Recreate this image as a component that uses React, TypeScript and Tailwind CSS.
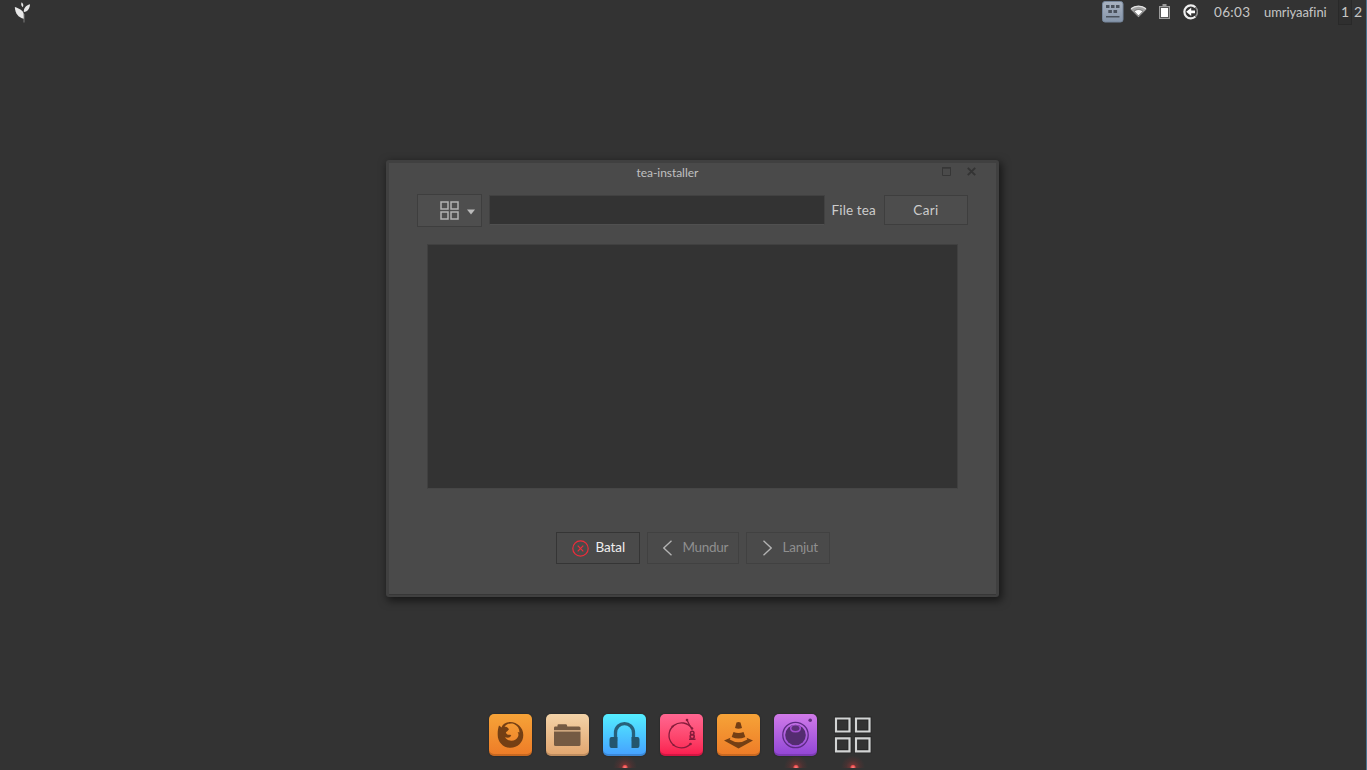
import type { ReactNode } from "react";

function LeafLogo() {
  return (
    <svg className="ml-[14px] h-[24px] w-[18px]" viewBox="0 0 18 24" fill="#e8e8e8">
      <path d="M.8 7C5 8.400 9.600 10.500 9.800 14.500L10 18.800C4 17.400 1.300 13.500.8 7Z" />
      <path d="M16 4.200C11.500 5.500 9.700 8 9.800 12C14 11.300 15.600 8.800 16 4.200Z" />
      <path d="M7.700 2.300C9.500 3.700 9.700 5.700 8.800 7.200C7 6 6.800 4 7.700 2.300Z" />
      <path d="M10 14V22.500" stroke="#8f8f8f" strokeWidth=".8" />
    </svg>
  );
}

function KeyboardIcon() {
  return (
    <svg className="mt-px h-[22px] w-[22px]" viewBox="0 0 22 22">
      <defs>
        <linearGradient id="kb" x1="0" y1="0" x2="0" y2="1">
          <stop stopColor="#a9b3c1" />
          <stop offset="1" stopColor="#8595aa" />
        </linearGradient>
      </defs>
      <rect x=".5" y=".5" width="20.500" height="20.500" rx="2.500" fill="url(#kb)" stroke="#76869b" />
      <path d="M4 4h3.500v3H4zM9 4h3.500v3H9zM14 4h3.500v3H14zM6.300 9h3.600v3H6.300zM11.500 9h3.600v3h-3.600zM4 15h13.500v1.600H4z" fill="#4a525d" />
    </svg>
  );
}

function WifiIcon() {
  return (
    <svg className="ml-[6px] mt-[5px] h-[13px] w-[17px]" viewBox="0 0 17 13">
      <path d="M.5 4.200C5-.2 12-.2 16.500 4.200L8.500 12.300Z" fill="#a5a5a5" />
      <path d="M1 3.800C5.200.2 11.800.2 16 3.800" fill="none" stroke="#e4e4e4" strokeWidth="1.200" />
      <path d="M4 6.300C7 3.900 10 3.900 13 6.300L8.500 11Z" fill="#fff" stroke="#666" strokeWidth=".9" />
    </svg>
  );
}

function BatteryIcon() {
  return (
    <svg className="ml-[12px] mt-[4px] h-[16px] w-[11px]" viewBox="0 0 11 16">
      <path d="M3.500 0h4v2H11v13H0V2h3.500z" fill="#9b9b9b" />
      <path d="M1 3h9v11H1z" fill="#575757" />
      <path d="M2 4h7v9H2z" fill="#fff" />
    </svg>
  );
}

function SessionIcon() {
  return (
    <svg className="ml-[12px] mt-[4px] h-[16px] w-[16px]" viewBox="0 0 16 16" fill="none">
      <path d="M13.400 3.200A6.500 6.500 0 1 0 13.400 12.500" stroke="#eee" strokeWidth="2.200" />
      <path d="M13.500 3.200A6.500 6.500 0 0 1 13.500 12.500" stroke="#8e8e8e" strokeWidth="1.600" />
      <path d="M4.200 7.800 9.200 3.700V6.500H13V9.200H9.200V12Z" fill="#fff" />
    </svg>
  );
}

function TopPanel() {
  return (
    <header className="flex h-[25px] w-full items-start justify-between text-[13px] text-[#c6c6c6]">
      <LeafLogo />
      <div className="flex h-full items-start whitespace-nowrap leading-[24px]">
        <KeyboardIcon />
        <WifiIcon />
        <BatteryIcon />
        <SessionIcon />
        <span className="ml-[16px] w-[50px] text-[13.500px] tracking-[0.350px]">06:03</span>
        <span className="w-[74px] text-[13px] tracking-[-0.050px]">umriyaafini</span>
        <span className="h-[25px] w-[14px] border border-t-0 border-[#292929] bg-[#2f2f2f] text-center text-[14px]">1</span>
        <span className="ml-[2px] w-[12px] text-[14px]">2</span>
      </div>
    </header>
  );
}

function GridIcon({ className }: { className: string }) {
  return (
    <svg className={className} viewBox="0 0 19 19" fill="none" stroke="#b3b3b3" strokeWidth="1.500">
      <path d="M1 1h7v7H1zM11 1h7v7h-7zM1 11h7v7H1zM11 11h7v7h-7z" />
    </svg>
  );
}

function TitleBar() {
  return (
    <div className="flex h-[23px] items-start">
      <div className="w-[248px]" />
      <h1 className="w-[305px] pt-[1px] text-[12px] leading-[18px] tracking-[-0.050px] text-[#c0c0c0]">tea-installer</h1>
      <svg className="mt-[4px] h-[9px] w-[9px]" viewBox="0 0 9 9" fill="none" stroke="#363636">
        <path d="M.5 1h8v7.500h-8z" />
        <path d="M0 .8h9" strokeWidth="1.400" />
      </svg>
      <svg className="ml-[16px] mt-[4px] h-[9px] w-[9px]" viewBox="0 0 9 9" fill="none" stroke="#333333" strokeWidth="1.900">
        <path d="M.8.8 8.200 8.200M8.200.8.8 8.200" />
      </svg>
    </div>
  );
}

function ActionButton({ className, icon, children }: { className: string; icon: ReactNode; children: ReactNode }) {
  return (
    <button className={`flex h-[32px] items-center border text-left text-[13.500px] ${className}`}>
      {icon}
      <span className="pb-[2px] leading-[28px]">{children}</span>
    </button>
  );
}

function InstallerWindow() {
  return (
    <main className="mx-auto mt-[135px] h-[437px] w-[613px] shrink-0 translate-x-[9px] rounded-[3px] border-[3px] border-b-[2px] border-[#404040] bg-[#4a4a4a] shadow-[2px_3px_8px_1px_rgba(0,0,0,0.55)]">
      <div className="flex h-full flex-col border-b border-[#373737]">
        <TitleBar />
        <div className="ml-[28px] flex h-[58px] items-start pt-[8px] text-[13.500px] text-[#cccccc]">
          <button className="flex h-[33px] w-[65px] items-center border border-[#3e3e3e] bg-[#4e4e4e] pl-[22px]">
            <GridIcon className="h-[19px] w-[19px] shrink-0" />
            <svg className="ml-[8px] mt-[3px] h-[6px] w-[8px]" viewBox="0 0 8 6">
              <path d="M0 .5h8L4 5.500z" fill="#bababa" />
            </svg>
          </button>
          <input className="ml-[7px] mt-px h-[30px] w-[336px] border border-[#414141] border-b-[#505050] bg-[#333333]" />
          <span className="ml-[7px] mt-px w-[52px] whitespace-nowrap leading-[30px] tracking-[0.150px]">File tea</span>
          <button className="mt-px h-[30px] w-[84px] border border-[#3e3e3e] bg-[#4d4d4d] pl-px leading-[27px] tracking-[0.350px]">Cari</button>
        </div>
        <section className="ml-[38px] h-[245px] w-[531px] border border-[#404040] border-b-[#464646] bg-[#333333]" />
        <div className="ml-[167px] mt-[43px] flex">
          <ActionButton
            className="w-[84px] border-[#353535] pl-[15px] tracking-[-0.100px] text-[#eeeeee]"
            icon={
              <svg className="mr-[7px] h-[17px] w-[17px]" viewBox="0 0 17 17" fill="none" stroke="#ee2c3a" strokeWidth="1.200">
                <circle cx="8.500" cy="8.500" r="7.700" />
                <path d="M5.700 5.700 11.300 11.300M11.300 5.700 5.700 11.300" />
              </svg>
            }
          >
            Batal
          </ActionButton>
          <ActionButton
            className="ml-[7px] w-[92px] border-[#414141] pl-[15px] tracking-[-0.300px] text-[#8f8f8f]"
            icon={
              <svg className="mr-[11px] h-[16px] w-[9px]" viewBox="0 0 9 16" fill="none" stroke="#b4b4b4" strokeWidth="1.300">
                <path d="M8.500.7.800 8 8.500 15.300" />
              </svg>
            }
          >
            Mundur
          </ActionButton>
          <ActionButton
            className="ml-[7px] w-[84px] border-[#414141] pl-[16px] tracking-[-0.250px] text-[#8f8f8f]"
            icon={
              <svg className="mr-[11px] h-[16px] w-[9px]" viewBox="0 0 9 16" fill="none" stroke="#b4b4b4" strokeWidth="1.300">
                <path d="M.5.700 8.200 8 .5 15.300" />
              </svg>
            }
          >
            Lanjut
          </ActionButton>
        </div>
      </div>
    </main>
  );
}

function DockItem({ className, running, children }: { className: string; running?: boolean; children: ReactNode }) {
  return (
    <div className="relative h-[56px] w-[43px]">
      <div className={`h-[42px] w-[43px] rounded-[5px] ${className}`}>
        <svg className="h-[43px] w-[43px]" viewBox="0 0 43 43">{children}</svg>
      </div>
      {running && (
        <span className="absolute bottom-[2px] left-[9px] h-[12px] w-[26px] bg-[radial-gradient(circle_at_50%_95%,#ff8585_0px,#e74c4c_2px,#a8353577_3px,#7d303044_7px,transparent_12px)]" />
      )}
    </div>
  );
}

const tile = "shadow-[inset_0_-2px_0_#00000028,0_0_2px_#00000066] bg-linear-to-b";

function Dock() {
  return (
    <nav className="ml-[489px] mt-auto flex h-[56px] shrink-0 gap-[14px]">
      <DockItem className={`${tile} from-[#f6a338] to-[#ed7b27]`}>
        <path
          fill="#743f14"
          fillRule="evenodd"
          d="M10 11.500 12.700 13.500C12.700 12 14.500 9.500 18 8.500C26 6.300 34.300 12.500 34.300 21C34.300 28.500 28.500 33.800 21.500 33.800C14 33.800 8.700 28 8.700 21C8.600 17 9 14.500 10 11.500ZM15.500 12.800C18 12.300 18.600 13.800 20 15.200L18 17.500C16.500 17.800 16.500 19.200 18 20.300C19.700 21.500 20.500 20.200 22.300 21.500C20.500 24.300 18.500 23.800 16 23.200C19 27.800 26.500 28 29 22.800C29.800 21 29.500 19.500 28.600 18L30.500 18.500C30.500 14.500 28.500 11.500 25 10C21.500 8.800 17.500 9.800 15.500 12.800Z"
        />
      </DockItem>
      <DockItem className={`${tile} from-[#f3d3a8] to-[#e1a56e]`}>
        <g fill="#745a43">
          <path d="M8 16.300V14C8 12.900 8.800 12.500 9.500 12.500H11.500V11.300Q11.500 10.300 12.500 10.300H20Q21 10.300 21.300 12.500H33Q34.500 12.500 34.500 14V16.300Z" />
          <path d="M8 17.500H34.500V30.500Q34.500 32 33 32H9.500Q8 32 8 30.500Z" />
        </g>
      </DockItem>
      <DockItem running className={`${tile} from-[#55eeff] to-[#469fff]`}>
        <path d="M12.500 27V19C12.500 6.500 30.500 6.500 30.500 19V27" fill="none" stroke="#27607a" strokeWidth="3.300" />
        <path d="M8.500 23H14.500V34H8.500Q6.500 34 6.500 31V26Q6.500 23 8.500 23ZM28.500 23H34.500Q36.500 23 36.500 26V31Q36.500 34 34.500 34H28.500Z" fill="#24566e" />
      </DockItem>
      <DockItem className={`${tile} from-[#ff6691] to-[#fa164d]`}>
        <path d="M32 14.500A12.500 12.500 0 1 0 30.500 30" fill="none" stroke="#861c3b" strokeWidth="1.300" />
        <path d="M27 6 29.500 11 32 14.500" fill="none" stroke="#861c3b" strokeWidth="1.200" />
        <g fill="#861c3b">
          <circle cx="27" cy="6" r="1.300" /><circle cx="32" cy="14.500" r="1.300" />
          <circle cx="12.500" cy="12.500" r="1.100" /><circle cx="13.500" cy="31" r="1.100" />
          <circle cx="30.500" cy="30" r="1.300" />
          <path d="M29 24.500H35.500V26H29Z" />
        </g>
        <circle cx="32.200" cy="19" r="1.800" fill="none" stroke="#861c3b" strokeWidth="1.400" />
        <circle cx="32.200" cy="22.600" r="2" fill="none" stroke="#861c3b" strokeWidth="1.600" />
      </DockItem>
      <DockItem className={`${tile} from-[#f6a338] to-[#ed7b27]`}>
        <g fill="#743f14">
          <path d="M19.500 8.500Q21.500 7.500 23.500 8.500L25 14Q21.500 15.500 18 14Z" />
          <path d="M16.500 18Q21.500 20 26.500 18L28.300 23Q21.500 26 14.700 23Z" />
          <path d="M13.500 23.800 12.700 25.500Q21.500 31 30.300 25.500L29.500 23.800L36 26.500L21.500 34.500L7 26.500Z" />
        </g>
      </DockItem>
      <DockItem running className={`${tile} from-[#d17ae9] to-[#9144d5]`}>
        <circle cx="21.500" cy="21" r="12.700" fill="none" stroke="#5c2a83" strokeWidth="1.300" />
        <circle cx="21.500" cy="21" r="10.300" fill="#542c70" />
        <path d="M16 12.400Q21.500 9.500 27 12.400Q28 18.500 21.500 18.500Q15 18.500 16 12.400Z" fill="#a14dce" />
        <ellipse cx="21.500" cy="14.200" rx="3.900" ry="2.700" fill="#5d3079" />
        <circle cx="36.200" cy="6.300" r="1.800" fill="#633080" />
      </DockItem>
      <DockItem running className="">
        <path d="M5 4.500h13.500v13H5zM25 4.500h13.500v13H25zM5 24.300h13.500v13H5zM25 24.300h13.500v13H25z" fill="none" stroke="#272727" strokeWidth="4" />
        <path d="M5 4.500h13.500v13H5zM25 4.500h13.500v13H25zM5 24.300h13.500v13H5zM25 24.300h13.500v13H25z" fill="none" stroke="#d2d4d4" strokeWidth="2.200" />
      </DockItem>
    </nav>
  );
}

export default function App() {
  return (
    <div className="flex h-screen w-full flex-col overflow-hidden border-r border-[#4a7490] bg-[#333333] font-['Lato',sans-serif]">
      <TopPanel />
      <InstallerWindow />
      <Dock />
    </div>
  );
}
